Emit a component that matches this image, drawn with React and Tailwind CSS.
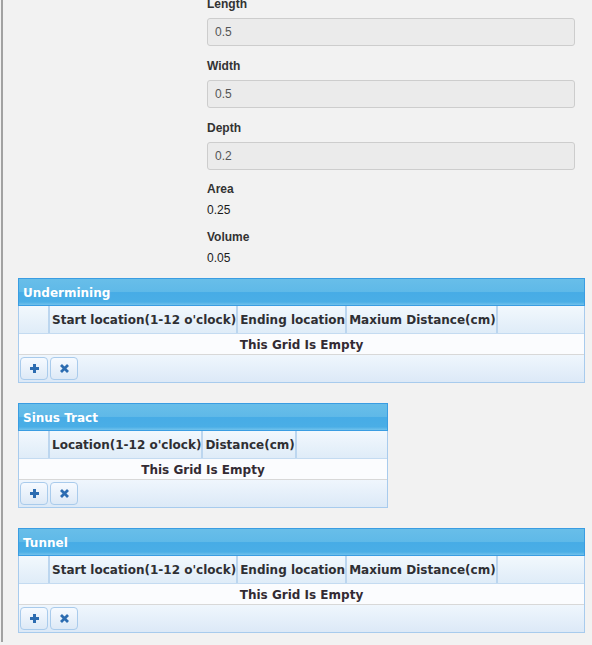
import React from "react";

const grid = { fontFamily: '"DejaVu Sans", Verdana, sans-serif' };
const form = { fontFamily: '"Liberation Sans", Arial, sans-serif' };

function PlusIcon() {
  return (
    <svg width="11" height="11" viewBox="0 0 11 11">
      <path d="M5.5 1v9M1 5.5h9" stroke="#2c6cb1" strokeWidth="3" strokeLinecap="butt" />
    </svg>
  );
}

function XIcon() {
  return (
    <svg width="11" height="11" viewBox="0 0 11 11">
      <path d="M2 2l7 7M9 2l-7 7" stroke="#2c6cb1" strokeWidth="2.8" />
    </svg>
  );
}

function Btn({ children }) {
  return (
    <div className="w-[28px] h-[23px] rounded-[4px] border border-[#a9cbec] bg-[linear-gradient(to_bottom,#f6faff,#dde9f6)] flex items-center justify-center">
      {children}
    </div>
  );
}

function Panel({ title, widthClass, cols }) {
  return (
    <div className={widthClass} style={grid}>
      <div className="h-[28px] border border-[#3a9de2] bg-[linear-gradient(to_bottom,#68bee9_0%,#5fb9e8_48%,#47ace6_52%,#4aaee6_88%,#72c2ec_100%)] text-white font-bold text-[12px] leading-[24px] pt-[2px] pl-[4px]">
        {title}
      </div>
      <div className="border-x border-b border-[#a8cbed]">
        <div className="flex h-[28px] bg-[linear-gradient(to_bottom,#f2f8fd,#dfecf8)] text-[#2f2f33] font-bold text-[12px] border-b border-[#c4dbf1]">
          <div className="w-[31px] border-r-2 border-[#bcd6ef]" />
          {cols.map((c) => (
            <div key={c} className="pl-[2px] pr-0 pt-[2px] leading-[24px] border-r-2 border-[#bcd6ef] whitespace-nowrap">
              {c}
            </div>
          ))}
          <div className="flex-1" />
        </div>
        <div className="h-[21px] bg-[#fbfcfe] border-b border-[#d8d8d8] text-center text-[12px] font-bold leading-[20px] pt-[1px] text-[#332b33]">
          This Grid Is Empty
        </div>
        <div className="h-[27px] bg-[linear-gradient(to_bottom,#eff6fd,#dce9f7)] flex items-center gap-[2px] pl-[1px]">
          <Btn>
            <PlusIcon />
          </Btn>
          <Btn>
            <XIcon />
          </Btn>
        </div>
      </div>
    </div>
  );
}

function Field({ label, value, mb }) {
  return (
    <div className={mb}>
      <div className="text-[12px] leading-[15px] font-bold text-[#333] mb-[6px]">{label}</div>
      <div className="w-[368px] h-[28px] rounded-[3px] border border-[#cdcdcd] bg-[#ebebeb] text-[12px] leading-[26px] text-[#555] pl-[7px]">
        {value}
      </div>
    </div>
  );
}

function Stat({ label, value, mb }) {
  return (
    <div className={mb}>
      <div className="text-[12px] leading-[15px] font-bold text-[#333] mb-[6px]">{label}</div>
      <div className="text-[12px] leading-[15px] text-[#1a1a1a]">{value}</div>
    </div>
  );
}

export default function App() {
  const undCols = ["Start location(1-12 o'clock)", "Ending location", "Maxium Distance(cm)"];
  return (
    <div className="bg-[#f2f2f2] min-h-[645px] w-[592px] overflow-hidden pl-[1px]">
      <div className="border-l-2 border-[#a2a2a2] min-h-[645px]">
        <div className="pl-[204px] -mt-[3px]" style={form}>
          <Field label="Length" value="0.5" mb="mb-[13px]" />
          <Field label="Width" value="0.5" mb="mb-[13px]" />
          <Field label="Depth" value="0.2" mb="mb-[12px]" />
          <Stat label="Area" value="0.25" mb="mb-[12px]" />
          <Stat label="Volume" value="0.05" mb="" />
        </div>
        <div className="pl-[15px] mt-[12px] flex flex-col gap-[20px]">
          <Panel title="Undermining" widthClass="w-[567px]" cols={undCols} />
          <Panel title="Sinus Tract" widthClass="w-[370px]" cols={["Location(1-12 o'clock)", "Distance(cm)"]} />
          <Panel title="Tunnel" widthClass="w-[567px]" cols={undCols} />
        </div>
      </div>
    </div>
  );
}
